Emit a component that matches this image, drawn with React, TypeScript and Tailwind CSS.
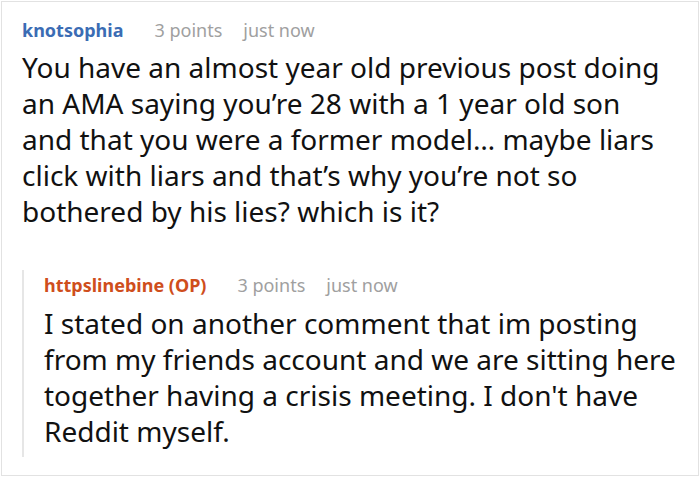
import React from 'react';

const Meta = ({ points, time }: { points: string; time: string }) => (
  <>
    <span className="ml-[31px] text-[#a0a0a0]">{points}</span>
    <span className="ml-[21px] text-[#a0a0a0]">{time}</span>
  </>
);

const App = () => {
  return (
    <div className="w-[700px] h-[478px] bg-white font-['Noto_Sans',sans-serif]">
      <div className="ml-px mt-px w-[698px] h-[475px] border border-[#e2e2e2] pl-[20px] pr-[14px] pt-[16px]">
        <div className="flex items-center text-[18px] leading-[24px]">
          <span className="font-bold text-[#3b6cb4]">knotsophia</span>
          <Meta points="3 points" time="just now" />
        </div>
        <p className="mt-[7px] pr-[7px] text-[28px] leading-[36px] text-[#111]">
          You have an almost year old previous post doing an AMA saying you’re 28 with a 1 year old son
          and that you were a former model… maybe liars click with liars and that’s why you’re not so
          bothered by his lies? which is it?
        </p>
        <div className="mt-[41px] border-l-2 border-[#e6e6e6] pl-[20px] pt-[3px] pb-[8px]">
          <div className="flex items-center text-[18px] leading-[24px]">
            <span className="font-bold text-[#cf4e1c]">httpslinebine (OP)</span>
            <Meta points="3 points" time="just now" />
          </div>
          <p className="mt-[8px] text-[28px] leading-[36px] text-[#111]">
            I stated on another comment that im posting from my friends account and we are sitting here
            together having a crisis meeting. I don't have Reddit myself.
          </p>
        </div>
      </div>
    </div>
  );
};

export default App;
